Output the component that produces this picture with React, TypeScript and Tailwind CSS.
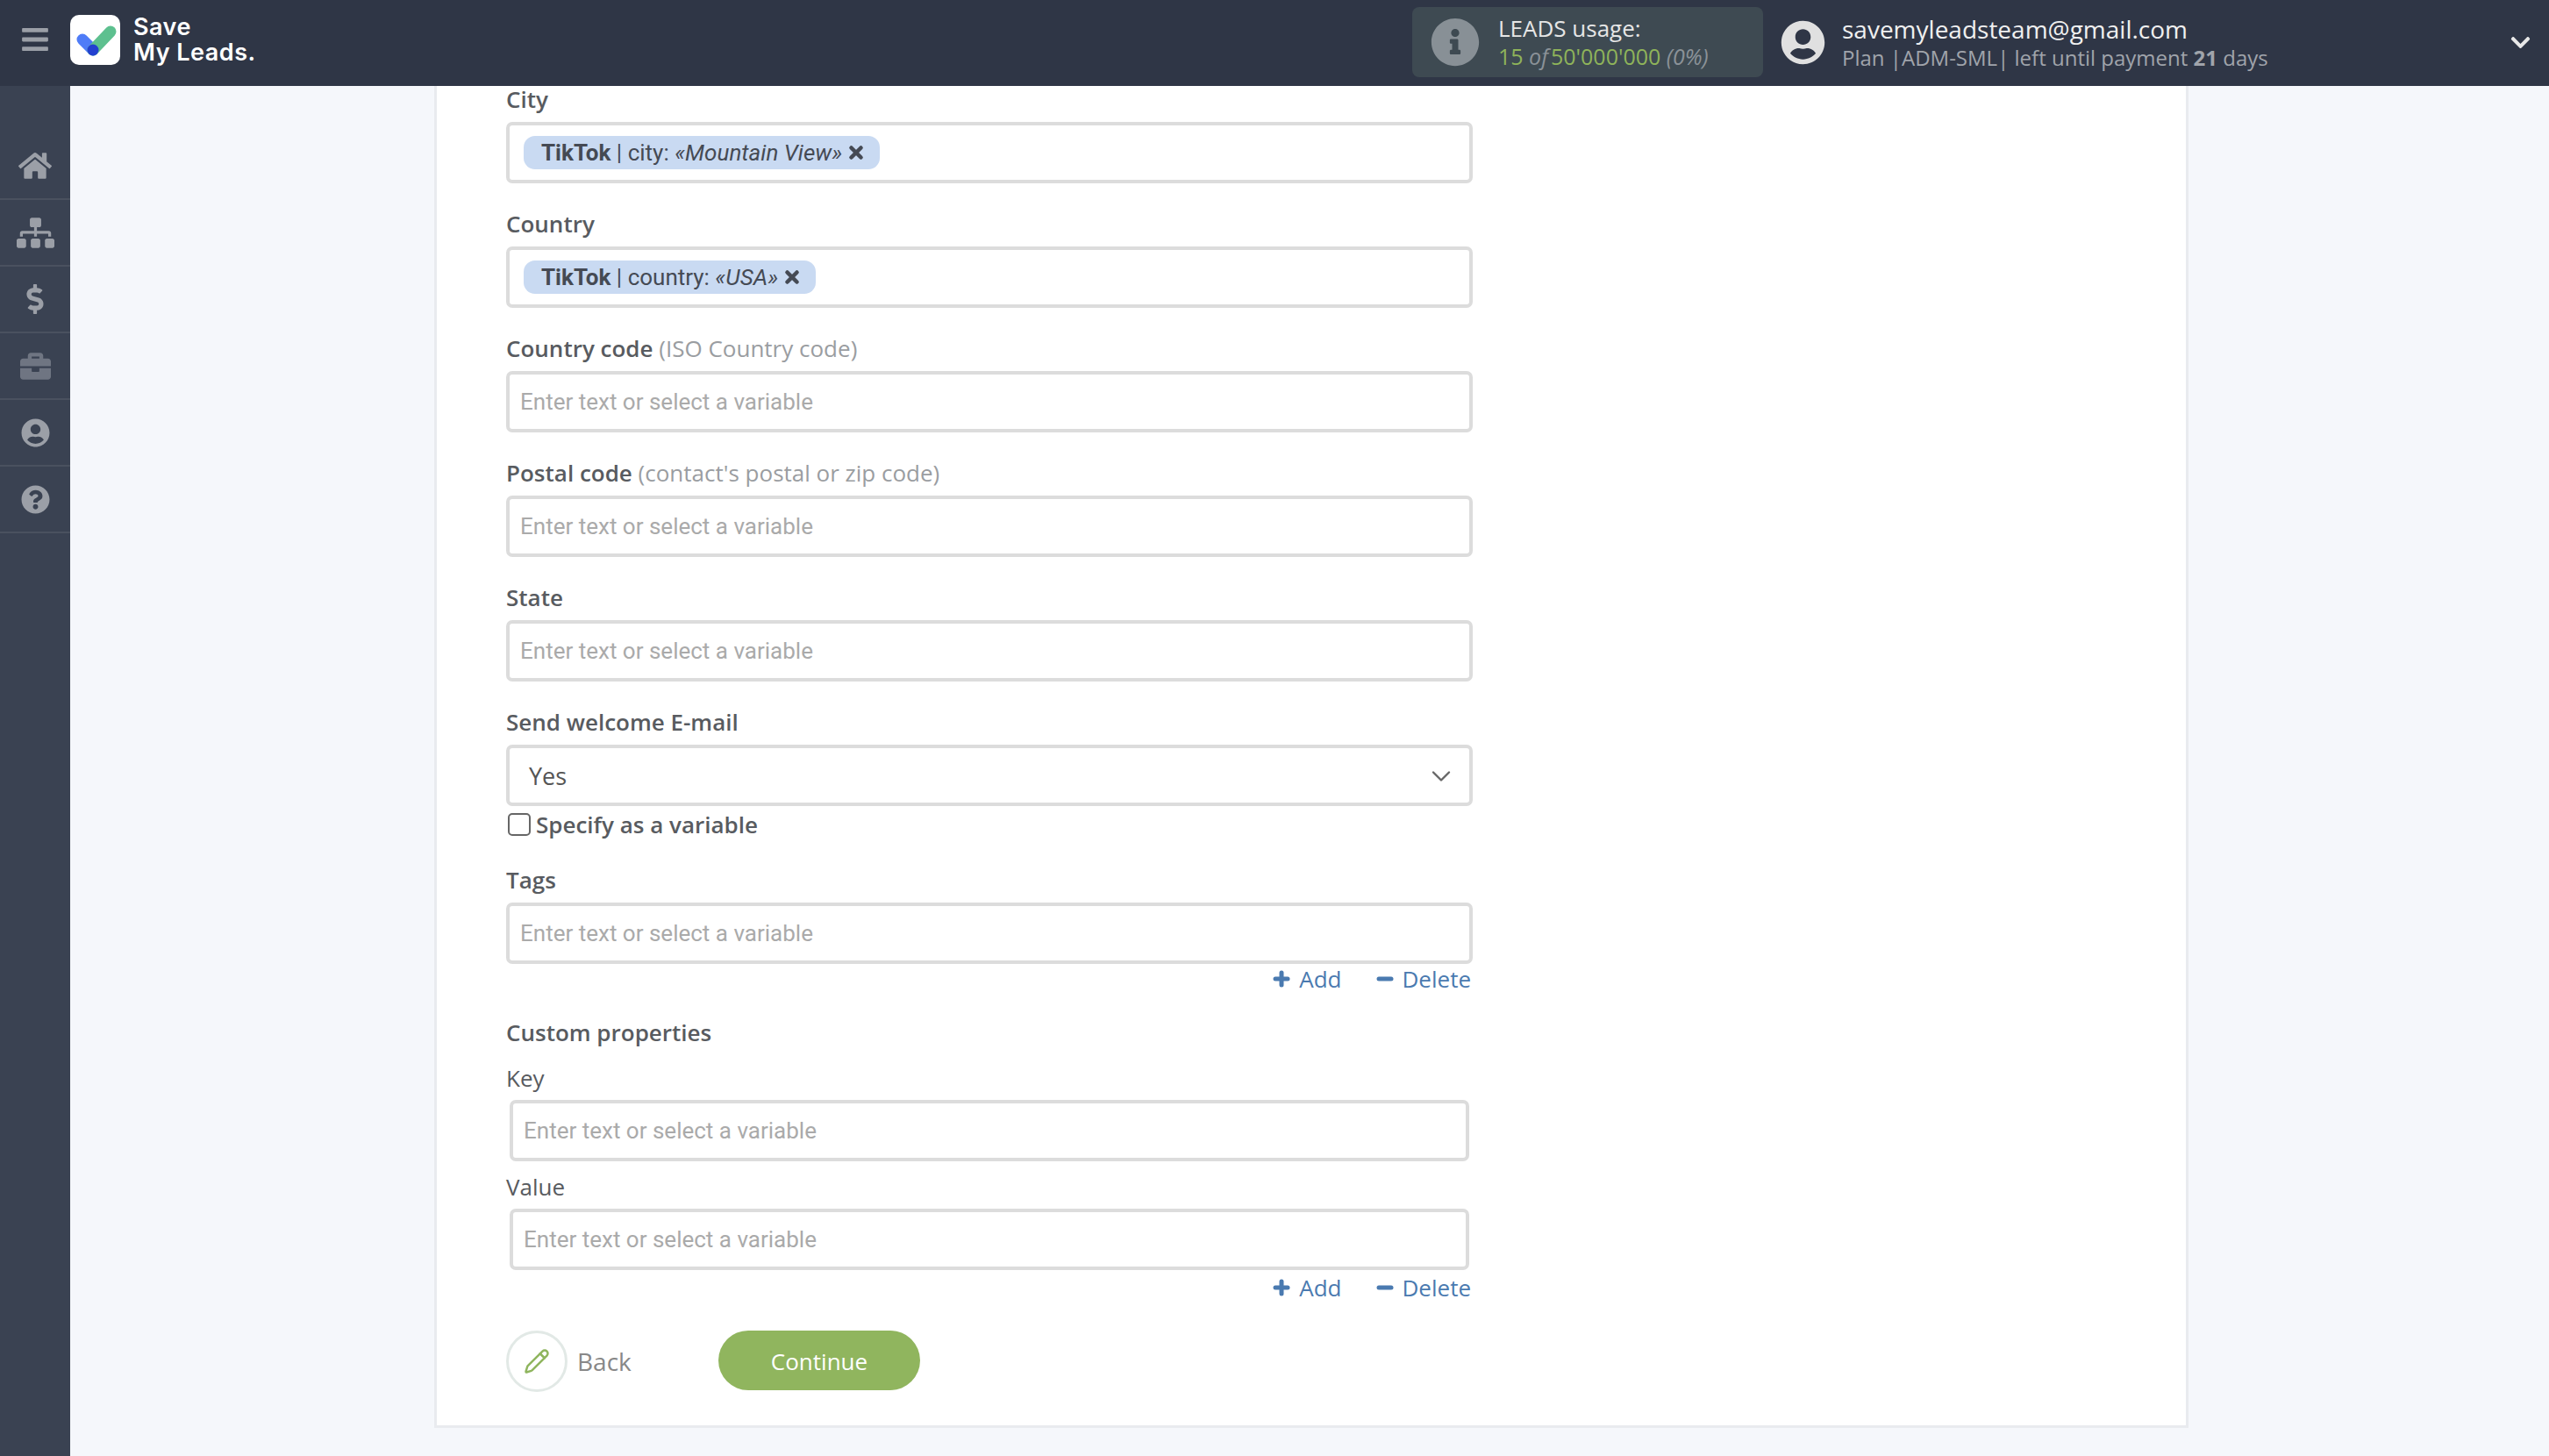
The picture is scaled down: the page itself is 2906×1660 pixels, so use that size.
import { ChevronDown, Pencil, Plus, Minus, X } from "lucide-react";
import {
  FaBars,
  FaBriefcase,
  FaChevronDown,
  FaDollarSign,
  FaHome,
  FaInfoCircle,
  FaQuestionCircle,
  FaSitemap,
  FaUserCircle,
} from "react-icons/fa";

const navItems = [
  { icon: <FaHome size={38} />, color: "text-[#9b9fa7]" },
  { icon: <FaSitemap size={43} />, color: "text-[#9b9fa7]" },
  { icon: <FaDollarSign size={34} />, color: "text-[#9b9fa7]" },
  { icon: <FaBriefcase size={35} />, color: "text-[#6f7582]" },
  { icon: <FaUserCircle size={33} />, color: "text-[#9b9fa7]" },
  { icon: <FaQuestionCircle size={33} />, color: "text-[#9b9fa7]" },
];

function Label({ children }: { children: React.ReactNode }) {
  return (
    <div className="h-[30px] mb-[11px] text-[26px] leading-[30px] font-semibold text-[#585b60]">
      {children}
    </div>
  );
}

function TextBox({ className = "w-full" }: { className?: string }) {
  return (
    <input
      type="text"
      placeholder="Enter text or select a variable"
      className={`${className} block h-[70px] px-[12px] bg-white border-4 border-[#dcdcdc] rounded-[7px] outline-none font-['Roboto'] text-[26px] placeholder:text-[#aaaaaa]`}
    />
  );
}

function Chip({ field, value }: { field: string; value: string }) {
  return (
    <div className="h-[70px] px-[16px] flex items-center bg-white border-4 border-[#dcdcdc] rounded-[7px]">
      <span className="h-[38px] pl-[20px] pr-[16px] flex items-center gap-[5px] bg-[#c9daf2] rounded-[13px] font-['Roboto'] text-[26px] text-[#454a54]">
        <span className="whitespace-pre">
          <b className="font-bold">TikTok</b> | {field}: <i>«{value}»</i>
        </span>
        <X size={22} strokeWidth={5} />
      </span>
    </div>
  );
}

function Field({ label, hint }: { label: string; hint?: string }) {
  return (
    <div className="mb-[31px]">
      <Label>
        {label}
        {hint && <span className="font-normal text-[#9a9da1]"> {hint}</span>}
      </Label>
      <TextBox />
    </div>
  );
}

function AddDelete({ className }: { className: string }) {
  return (
    <div className={`${className} h-[32px] pr-[2px] flex items-center justify-end gap-[37px] text-[26px] leading-[32px] text-[#4a7ab0]`}>
      <span className="flex items-center gap-[8px]">
        <Plus size={24} strokeWidth={5} />
        Add
      </span>
      <span className="flex items-center gap-[8px]">
        <Minus size={24} strokeWidth={5} />
        Delete
      </span>
    </div>
  );
}

export default function App() {
  return (
    <div className="w-[2906px] h-[1660px] flex flex-col overflow-hidden bg-[#f5f7fb] font-['Open_Sans',sans-serif]">
      {/* Header */}
      <header className="h-[98px] shrink-0 flex items-center pb-[2px] bg-[#2f3646]">
        <div className="flex items-center pb-[6px]">
          <div className="w-[80px] flex justify-center text-[#9b9fa7]">
            <FaBars size={34} />
          </div>
          <div className="w-[57px] h-[57px] rounded-[10px] bg-white flex items-center justify-center">
            <svg width="57" height="57" viewBox="0 0 57 57" fill="none">
              <path d="M14 28 L26 40" stroke="#4f7cf7" strokeWidth="13" strokeLinecap="round" />
              <path d="M26 40 L46 19" stroke="#5dc08f" strokeWidth="13" strokeLinecap="round" />
              <circle cx="26" cy="40" r="6.5" fill="#2340d0" />
            </svg>
          </div>
          <div className="ml-[15px] w-[150px] font-['Inter'] font-semibold text-[27px] leading-[29px] text-white tracking-[0.5px]">
            <div>Save</div>
            <div>My Leads.</div>
          </div>
        </div>

        <div className="ml-[1308px] w-[400px] h-[80px] flex items-center rounded-[8px] bg-[#3e4a52] pl-[21px]">
          <FaInfoCircle size={56} className="text-[#889096]" />
          <div className="ml-[21px]">
            <div className="text-[26px] leading-[32px] text-[#e6e6e6]">LEADS usage:</div>
            <div className="text-[25px] leading-[32px] text-[#8fb45a]">
              15 <i className="text-[#8b9298]">of</i>
              <span className="ml-[3px]">50'000'000</span> <i className="text-[#8b9298]">(0%)</i>
            </div>
          </div>
        </div>

        <FaUserCircle size={51} className="ml-[20px] text-[#e0e0e0]" />
        <div className="ml-[19px] w-[761px]">
          <div className="text-[28px] leading-[36px] text-[#f0f0f0]">savemyleadsteam@gmail.com</div>
          <div className="text-[24px] leading-[30px] text-[#a0a4ab]">
            Plan |ADM-SML| left until payment <b className="font-bold">21</b> days
          </div>
        </div>
        <FaChevronDown size={25} className="text-[#e8e8e8]" />
      </header>

      <div className="flex-1 flex min-h-0">
        {/* Sidebar */}
        <nav className="w-[80px] shrink-0 pt-[54px] bg-[#3a4252]">
          {navItems.map((item, i) => (
            <div
              key={i}
              className={`h-[76px] flex items-center justify-center border-b-2 border-[#4a515f] ${item.color}`}
            >
              {item.icon}
            </div>
          ))}
        </nav>

        {/* Main card */}
        <main className="flex-1">
          <div className="ml-[415px] w-[2000px] h-[1530px] pl-[79px] bg-white border-x-3 border-b-3 border-[#e9ebef]">
            <div className="w-[1102px]">
              <div className="mb-[31px]">
                <Label>City</Label>
                <Chip field="city" value="Mountain View" />
              </div>
              <div className="mb-[31px]">
                <Label>Country</Label>
                <Chip field="country" value="USA" />
              </div>
              <Field label="Country code" hint="(ISO Country code)" />
              <Field label="Postal code" hint="(contact's postal or zip code)" />
              <Field label="State" />

              <Label>Send welcome E-mail</Label>
              <div className="h-[70px] pl-[22px] pr-[14px] flex items-center justify-between bg-white border-4 border-[#dcdcdc] rounded-[7px] text-[27px] text-[#555555]">
                <span className="pt-[2px]">Yes</span>
                <ChevronDown size={36} strokeWidth={1.6} className="mt-[2px] text-[#666666]" />
              </div>
              <label className="mt-[8px] ml-[2px] h-[26px] flex items-center gap-[6px] text-[26px] font-semibold text-[#585b60]">
                <span className="w-[26px] h-[26px] rounded-[5px] border-2 border-[#666666] bg-white" />
                Specify as a variable
              </label>

              <div className="mt-[35px]">
                <Label>Tags</Label>
                <TextBox />
              </div>
              <AddDelete className="mt-[1px]" />

              <div className="mt-[29px] h-[32px] text-[26px] leading-[32px] font-semibold text-[#585b60]">
                Custom properties
              </div>
              <div className="mt-[20px] h-[32px] mb-[9px] text-[26px] leading-[32px] text-[#585b60]">Key</div>
              <TextBox className="ml-[4px] w-[1094px]" />
              <div className="mt-[13px] h-[32px] mb-[9px] text-[26px] leading-[32px] text-[#585b60]">Value</div>
              <TextBox className="ml-[4px] w-[1094px]" />
              <AddDelete className="mt-[4px]" />

              <div className="mt-[33px] flex items-start">
                <div className="w-[70px] h-[70px] rounded-full border-3 border-[#e2e9e6] flex items-center justify-center">
                  <Pencil size={30} strokeWidth={2} className="text-[#8fb55e]" />
                </div>
                <span className="ml-[11px] w-[63px] h-[70px] flex items-center text-[28px] text-[#888888]">Back</span>
                <button className="ml-[98px] w-[230px] h-[68px] pt-[2px] rounded-full bg-[#90b55e] text-white text-[26px]">
                  Continue
                </button>
              </div>
            </div>
          </div>
        </main>
      </div>
    </div>
  );
}
